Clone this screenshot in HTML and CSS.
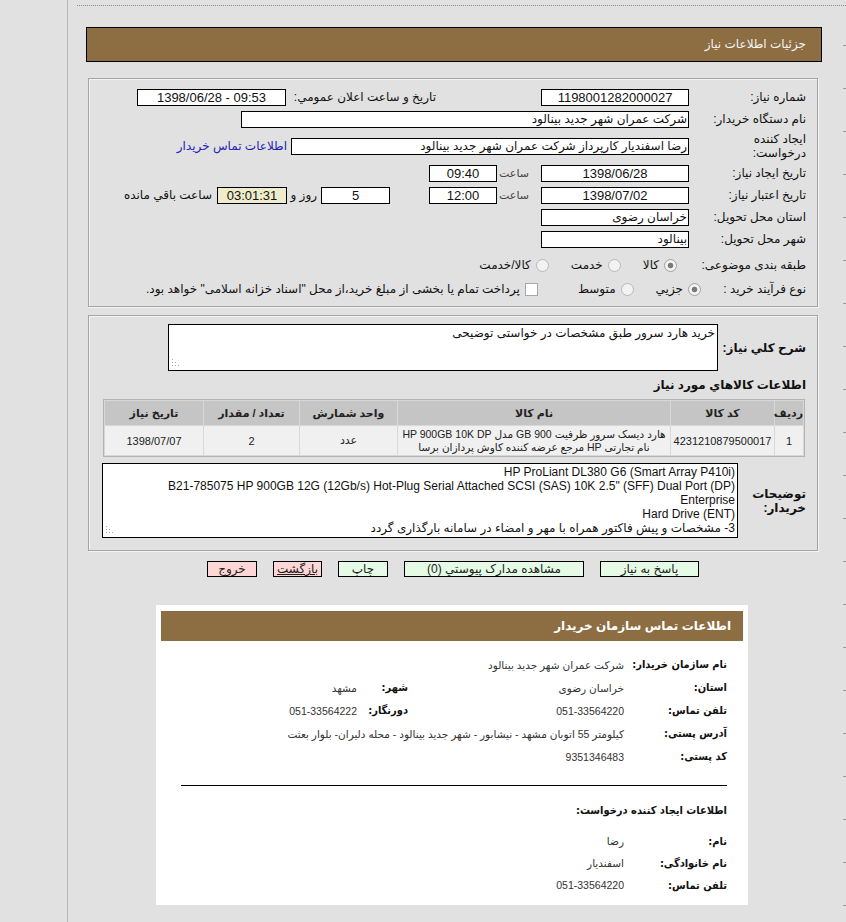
FILE: index.html
```html
<!DOCTYPE html>
<html lang="fa" dir="rtl">
<head>
<meta charset="utf-8">
<title>جزئیات اطلاعات نیاز</title>
<link rel="stylesheet" href="styles.css">
</head>
<body>
<div class="page">
  <div class="side"></div>
  <div class="main">
    <div class="dots"></div>
    <div class="title-bar">جزئیات اطلاعات نیاز</div>

    <div class="box box1">
      <div class="row">
        <div class="lbl">شماره نیاز:</div>
        <div class="inp c w148" dir="ltr">1198001282000027</div>
        <div class="lbl2">تاریخ و ساعت اعلان عمومي:</div>
        <div class="inp c w149" dir="ltr">1398/06/28 - 09:53</div>
      </div>
      <div class="row">
        <div class="lbl">نام دستگاه خریدار:</div>
        <div class="inp fa w448">شرکت عمران شهر جدید بینالود</div>
      </div>
      <div class="row tall">
        <div class="lbl two">ایجاد کننده درخواست:</div>
        <div class="inp fa w398">رضا اسفندیار کارپرداز شرکت عمران شهر جدید بینالود</div>
        <a class="link">اطلاعات تماس خریدار</a>
      </div>
      <div class="row">
        <div class="lbl">تاریخ ایجاد نیاز:</div>
        <div class="inp c w148" dir="ltr">1398/06/28</div>
        <div class="hour">ساعت</div>
        <div class="inp c w68" dir="ltr">09:40</div>
      </div>
      <div class="row">
        <div class="lbl">تاریخ اعتبار نیاز:</div>
        <div class="inp c w148" dir="ltr">1398/07/02</div>
        <div class="hour">ساعت</div>
        <div class="inp c w68" dir="ltr">12:00</div>
        <div class="inp c w69 days" dir="ltr">5</div>
        <div class="word">روز و</div>
        <div class="inp c w70 remain" dir="ltr">03:01:31</div>
        <div class="word2">ساعت باقي مانده</div>
      </div>
      <div class="row">
        <div class="lbl">استان محل تحویل:</div>
        <div class="inp fa w148">خراسان رضوی</div>
      </div>
      <div class="row">
        <div class="lbl">شهر محل تحویل:</div>
        <div class="inp fa w148">بینالود</div>
      </div>
      <div class="row opt-row r8">
        <div class="lbl">طبقه بندی موضوعی:</div>
        <div class="opts">
          <span class="rd on"></span><span class="ot">کالا</span>
          <span class="rd"></span><span class="ot">خدمت</span>
          <span class="rd"></span><span class="ot">کالا/خدمت</span>
        </div>
      </div>
      <div class="row opt-row">
        <div class="lbl narrow">نوع فرآیند خرید :</div>
        <div class="opts">
          <span class="rd on"></span><span class="ot">جزيي</span>
          <span class="rd"></span><span class="ot">متوسط</span>
          <span class="cb"></span><span class="ot last">پرداخت تمام یا بخشی از مبلغ خرید،از محل "اسناد خزانه اسلامی" خواهد بود.</span>
        </div>
      </div>
    </div>

    <div class="box box2">
      <div class="descrow">
        <div class="blbl w88">شرح کلي نیاز:</div>
        <div class="ta ta1">
          <div class="ln">خرید هارد سرور طبق مشخصات در خواستی توضیحی</div>
          <svg class="grip" width="8" height="8" viewBox="0 0 8 8"><g fill="#a8a8a8"><rect x="0" y="6" width="1" height="1"/><rect x="3" y="6" width="1" height="1"/><rect x="6" y="6" width="1" height="1"/><rect x="0" y="3" width="1" height="1"/><rect x="3" y="3" width="1" height="1"/><rect x="0" y="0" width="1" height="1"/></g></svg>
        </div>
      </div>
      <div class="sect">اطلاعات کالاهاي مورد نیاز</div>
      <table class="items">
        <colgroup>
          <col class="k1"><col class="k2"><col class="k3"><col class="k4"><col class="k5"><col class="k6">
        </colgroup>
        <thead>
          <tr><th>ردیف</th><th>کد کالا</th><th>نام کالا</th><th>واحد شمارش</th><th>تعداد / مقدار</th><th>تاریخ نیاز</th></tr>
        </thead>
        <tbody>
          <tr>
            <td>1</td>
            <td>4231210879500017</td>
            <td class="name">هارد دیسک سرور ظرفیت 900 GB مدل HP 900GB 10K DP<br>نام تجارتی HP مرجع عرضه کننده کاوش پردازان برسا</td>
            <td class="fa-cell">عدد</td>
            <td>2</td>
            <td>1398/07/07</td>
          </tr>
        </tbody>
      </table>
      <div class="notesrow">
        <div class="blbl w68 wrap">توضیحات خریدار:</div>
        <div class="ta ta2">
          <div class="ln ltr">HP ProLiant DL380 G6 (Smart Array P410i)</div>
          <div class="ln ltr">B21-785075 HP 900GB 12G (12Gb/s) Hot-Plug Serial Attached SCSI (SAS) 10K 2.5" (SFF) Dual Port (DP)</div>
          <div class="ln ltr">Enterprise</div>
          <div class="ln ltr">Hard Drive (ENT)</div>
          <div class="ln">3- مشخصات و پیش فاکتور همراه با مهر و امضاء در سامانه بارگذاری گردد</div>
          <svg class="grip" width="8" height="8" viewBox="0 0 8 8"><g fill="#a8a8a8"><rect x="0" y="6" width="1" height="1"/><rect x="3" y="6" width="1" height="1"/><rect x="6" y="6" width="1" height="1"/><rect x="0" y="3" width="1" height="1"/><rect x="3" y="3" width="1" height="1"/><rect x="0" y="0" width="1" height="1"/></g></svg>
        </div>
      </div>
    </div>

    <div class="buttons">
      <div class="btn green w99">پاسخ به نیاز</div>
      <div class="btn green w180">مشاهده مدارک پیوستي (0)</div>
      <div class="btn green w50">چاپ</div>
      <div class="btn pink w49 ul">بازگشت</div>
      <div class="btn pink w50">خروج</div>
    </div>

    <div class="contact">
      <div class="c-head">اطلاعات تماس سازمان خریدار</div>
      <div class="c-body">
        <div class="grid">
          <div class="cl">نام سازمان خریدار:</div>
          <div class="cv span3">شرکت عمران شهر جدید بینالود</div>

          <div class="cl">استان:</div>
          <div class="cv">خراسان رضوی</div>
          <div class="cl">شهر:</div>
          <div class="cv">مشهد</div>

          <div class="cl">تلفن تماس:</div>
          <div class="cv">051-33564220</div>
          <div class="cl">دورنگار:</div>
          <div class="cv">051-33564222</div>

          <div class="cl">آدرس پستی:</div>
          <div class="cv span3">کیلومتر 55 اتوبان مشهد - نیشابور - شهر جدید بینالود - محله دلیران- بلوار بعثت</div>

          <div class="cl">کد پستی:</div>
          <div class="cv span3">9351346483</div>
        </div>
        <div class="rule"></div>
        <div class="c-sub">اطلاعات ایجاد کننده درخواست:</div>
        <div class="grid grid2">
          <div class="cl">نام:</div>
          <div class="cv span3">رضا</div>
          <div class="cl">نام خانوادگی:</div>
          <div class="cv span3">اسفندیار</div>
          <div class="cl">تلفن تماس:</div>
          <div class="cv span3">051-33564220</div>
        </div>
      </div>
    </div>
  </div>
</div>
</body>
</html>
```

FILE: styles.css
```css
* { box-sizing: border-box; }
html, body { margin: 0; padding: 0; }
body {
  background: #e1e1e1;
  font-family: "Liberation Sans", "DejaVu Sans", sans-serif;
  font-size: 12px;
  color: #111;
}
.page { display: flex; direction: ltr; min-height: 922px; }
.side { flex: 0 0 68px; border-right: 1px solid #b5b5b5; }
.main {
  flex: 1;
  direction: rtl;
  min-width: 0;
  background: repeating-linear-gradient(to bottom, transparent 0 42px, #9a9a9a 42px 43px) right 0 top 3px / 3px 100% no-repeat;
}

.dots { height: 6px; border-bottom: 1px dotted #8c8c8c; margin-left: 9px; }

.title-bar {
  margin: 21px 24px 0 18px;
  height: 35px;
  border: 1px solid #000;
  background: #8d6e43;
  color: #f4f4f4;
  line-height: 33px;
  padding-right: 15px;
  font-size: 12px;
}

.box {
  margin: 16px 28px 0 20px;
  border: 1px solid #a4a4a4;
  box-shadow: inset 1px 1px 0 #f3f3f3, 1px 1px 0 #f3f3f3;
}
.box1 { padding: 7px 11px 5px 0; }
.box2 { margin-top: 8px; padding: 8px 11px 12px 13px; }

.row { display: flex; align-items: center; height: 22px; }
.row.tall { height: 32px; }
.row.opt-row { height: 24px; }
.row.r8 { margin-top: 3px; }

.lbl { flex: 0 0 117px; min-width: 0; white-space: nowrap; font-size: 12px; }
.lbl.narrow { flex-basis: 105px; }
.lbl.two { white-space: normal; line-height: 14px; padding-left: 40px; }

.inp {
  height: 17px;
  border: 1px solid #000;
  background: #fff;
  font-size: 13px;
  line-height: 15px;
  padding: 0 2px;
  white-space: nowrap;
  overflow: hidden;
  flex: none;
}
.inp.fa { font-size: 12px; padding: 0 1px; }
.c { text-align: center; }
.w148 { width: 148px; }
.w149 { width: 149px; }
.w448 { width: 448px; }
.w398 { width: 398px; }
.w68 { width: 68px; }
.w69 { width: 69px; }
.w70 { width: 70px; }

.lbl2 { flex: 0 0 150px; min-width: 0; margin-right: 105px; white-space: nowrap; font-size: 12px; }
.link { color: #2323b8; margin-right: 4px; white-space: nowrap; font-size: 12px; }
.hour { flex: 0 0 44px; min-width: 0; padding-right: 12px; white-space: nowrap; font-size: 11px; color: #444; }
.days { margin-right: 39px; }
.word { flex: 0 0 34px; min-width: 0; padding-right: 4px; white-space: nowrap; font-size: 12px; }
.remain { background: #eeecca; }
.word2 { margin-right: 5px; white-space: nowrap; font-size: 12px; }

.opts { display: flex; align-items: center; }
.r8 .opts { margin-right: 12px; }
.rd {
  flex: none;
  width: 13px; height: 13px;
  border-radius: 50%;
  border: 1px solid #b8b8b8;
  background: #f2f2f2;
}
.rd.on { background: radial-gradient(circle, #7a7a7a 0 2.4px, #f2f2f2 3.2px); border-color: #a2a2a2; }
.cb {
  flex: none;
  width: 13px; height: 13px;
  border: 1px solid #a8a8a8;
  background: #fff;
  margin-right: 18px;
}
.ot { margin-right: 5px; margin-left: 22px; white-space: nowrap; font-size: 12px; }
.ot.last { margin-left: 0; }

.descrow { display: flex; align-items: center; }
.blbl { font-weight: bold; font-size: 12px; white-space: nowrap; flex: none; }
.blbl.wrap { white-space: normal; line-height: 14px; }
.w88 { width: 88px; }
.w68 { width: 68px; }

.ta {
  position: relative;
  border: 1px solid #000;
  background: #fff;
  padding: 1px 2px;
  font-size: 12px;
  line-height: 14px;
  flex: none;
}
.ta1 { width: 550px; height: 47px; }
.ta2 { width: 636px; height: 75px; }
.ln { white-space: nowrap; }
.ln.ltr { direction: ltr; text-align: right; }
.grip { position: absolute; left: 3px; bottom: 3px; }

.sect { font-weight: bold; font-size: 12px; line-height: 14px; margin-top: 7px; }

.items {
  margin-top: 7px;
  margin-right: 1px;
  width: 702px;
  table-layout: fixed;
  border-collapse: separate;
  border-spacing: 1px;
  border: 1px solid #b4b4b4;
  background: #d8d8d8;
}
.k1 { width: 28px; }
.k2 { width: 103px; }
.k3 { width: 272px; }
.k4 { width: 97px; }
.k5 { width: 95px; }
.k6 { width: 98px; }
.items th {
  height: 24px;
  padding: 0;
  background: #c5c5c5;
  font-size: 11px;
  font-weight: bold;
  color: #222;
}
.items td {
  height: 29px;
  padding: 0 2px;
  background: #f0f0f0;
  font-size: 11px;
  text-align: center;
  color: #222;
}
.items td.name { font-size: 10.5px; line-height: 13px; white-space: nowrap; overflow: hidden; }

.notesrow { display: flex; align-items: center; margin-top: 6px; }

.buttons {
  margin: 10px 28px 0 20px;
  display: flex;
  justify-content: center;
  gap: 16px;
}
.btn {
  height: 16px;
  border: 1px solid #000;
  font-size: 12px;
  line-height: 14px;
  text-align: center;
  color: #222;
  white-space: nowrap;
}
.btn.green { background: #e5fbe5; }
.btn.pink { background: #fdd6d6; }
.btn.ul { text-decoration: underline; }
.w99 { width: 99px; }
.w180 { width: 180px; }
.w50 { width: 50px; }
.w49 { width: 49px; }

.contact {
  margin: 28px 98px 0 88px;
  background: #fff;
  padding: 6px 5px 9px 5px;
}
.c-head {
  height: 30px;
  background: #8d6e43;
  color: #fff;
  font-weight: bold;
  font-size: 12px;
  line-height: 30px;
  padding-right: 12px;
}
.c-body { padding: 12px 16px 0 20px; }
.grid {
  display: grid;
  grid-template-columns: 103px 216px 51px 1fr;
  grid-auto-rows: 23px;
  align-items: center;
}
.grid2 { margin-top: 12px; grid-auto-rows: 22px; }
.cl {
  font-family: "DejaVu Sans Condensed", "DejaVu Sans", sans-serif;
  font-weight: bold;
  font-size: 11px;
  white-space: nowrap;
  color: #111;
}
.cv { font-size: 10.5px; color: #333; white-space: nowrap; }
.span3 { grid-column: span 3; }
.rule { margin-top: 17px; height: 1px; background: #000; }
.c-sub {
  font-family: "DejaVu Sans Condensed", "DejaVu Sans", sans-serif;
  margin-top: 18px;
  font-weight: bold;
  font-size: 11px;
  line-height: 14px;
}
```
